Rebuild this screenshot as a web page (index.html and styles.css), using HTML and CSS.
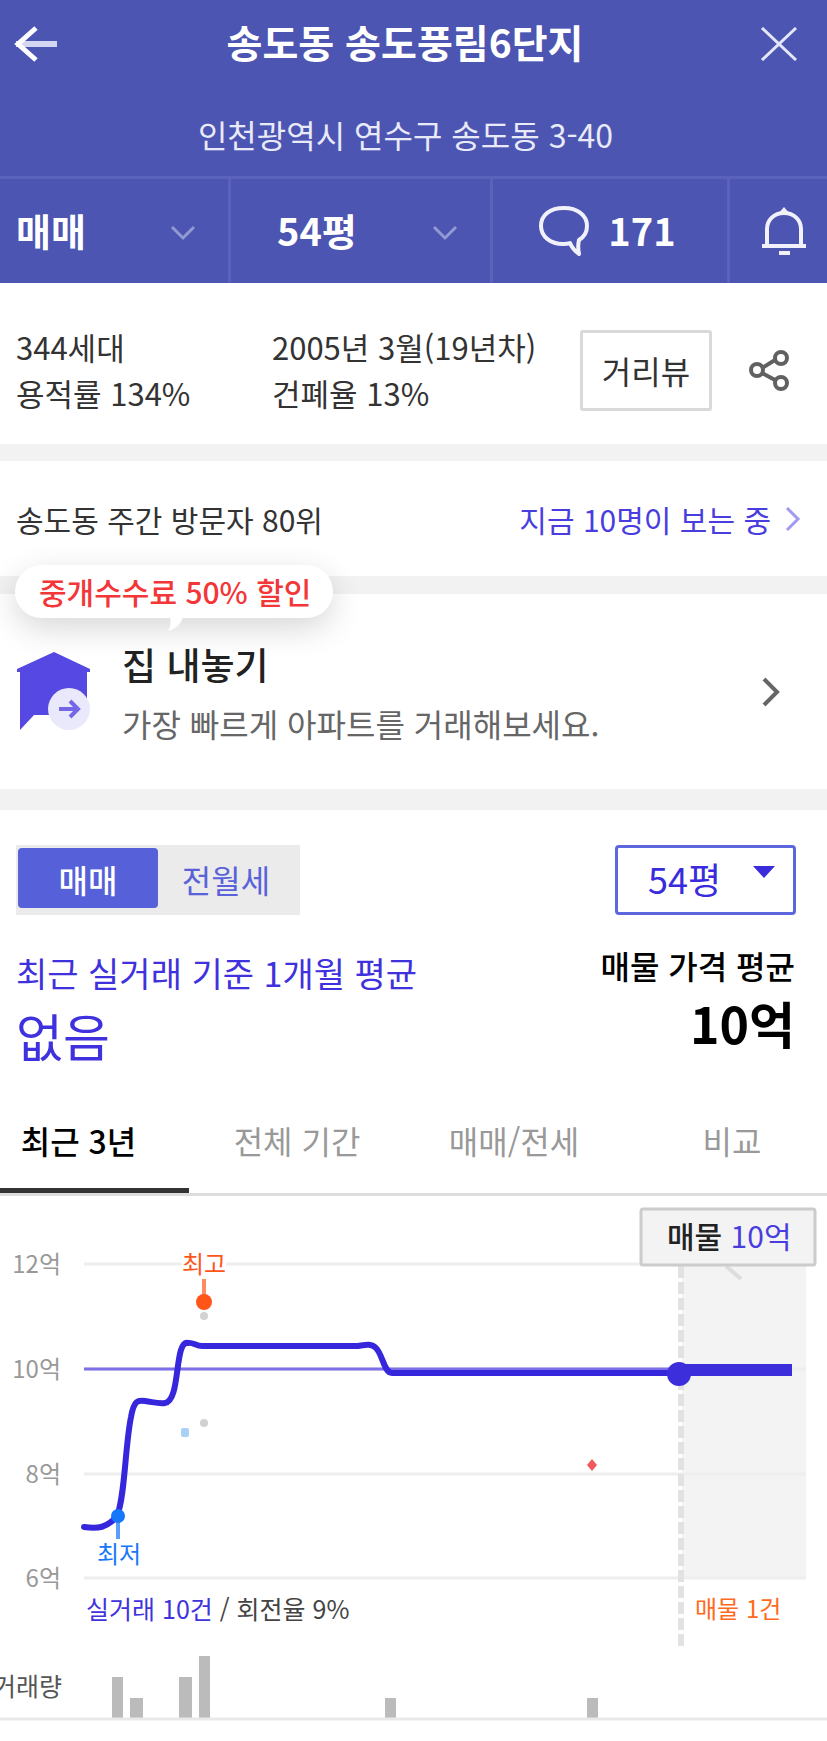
FILE: index.html
```html
<!DOCTYPE html>
<html lang="ko">
<head>
<meta charset="utf-8">
<meta name="viewport" content="width=device-width, initial-scale=1">
<title>송도동 송도풍림6단지</title>
<link rel="stylesheet" href="styles.css">
</head>
<body>
<header class="header">
  <div class="title-bar">
    <button class="icon-button" type="button" aria-label="뒤로">
      <svg width="44" height="38" viewBox="0 0 44 38" fill="none" stroke="#fff"><path d="M2 19H43" stroke-width="6" stroke="#d4d7f2"/><path d="M22 3L4 19L22 35" stroke-width="5"/></svg>
    </button>
    <h1 class="title">송도동 송도풍림6단지</h1>
    <button class="icon-button" type="button" aria-label="닫기">
      <svg width="38" height="34" viewBox="0 0 38 34" fill="none" stroke="#e4e6f7" stroke-width="3"><path d="M2 1L36 33M36 1L2 33"/></svg>
    </button>
  </div>
  <p class="address">인천광역시 연수구 송도동 3-40</p>
  <div class="filters">
    <div class="filter">
      <select class="filter-select" aria-label="거래 유형"><option>매매</option></select>
      <svg class="caret" width="26" height="16" viewBox="0 0 26 16" fill="none" stroke="#9399d3" stroke-width="3"><path d="M2 2L13 13L24 2"/></svg>
    </div>
    <div class="filter filter-area">
      <select class="filter-select" aria-label="평형"><option>54평</option></select>
      <svg class="caret" width="26" height="16" viewBox="0 0 26 16" fill="none" stroke="#9399d3" stroke-width="3"><path d="M2 2L13 13L24 2"/></svg>
    </div>
    <button class="filter filter-button" type="button" aria-label="이야기 171개">
      <svg width="52" height="52" viewBox="0 0 52 52" fill="none" stroke="#f0f1fb" stroke-width="4" stroke-linejoin="round"><path d="M26 3C12 3 3 10 3 21C3 32 13 39 25 39C28 39 30 39 32 38C34 43 37 46 41 49C40 44 40 39 41 35C46 32 49 27 49 21C49 10 39 3 26 3Z"/></svg>
      <span>171</span>
    </button>
    <button class="filter filter-bell" type="button" aria-label="알림">
      <svg width="46" height="48" viewBox="0 0 46 48" fill="none" stroke="#f0f1fb" stroke-width="4"><path d="M1 39H45"/><path d="M6 39V22C6 13 13 6 23 6C33 6 40 13 40 22V39"/><path d="M23 0L29 7H17Z" fill="#f0f1fb" stroke="none"/><path d="M18 46H29"/></svg>
    </button>
  </div>
</header>

<main>
  <section class="info">
    <p class="info-first">344세대<br>용적률 134%</p>
    <p class="info-second">2005년 3월(19년차)<br>건폐율 13%</p>
    <button class="street-view" type="button">거리뷰</button>
    <button class="icon-button" type="button" aria-label="공유">
      <svg width="42" height="42" viewBox="0 0 42 42" fill="none" stroke="#616161" stroke-width="4"><path d="M13 19L26 11M13 24L26 31"/><circle cx="8" cy="21" r="6"/><circle cx="32" cy="9" r="6"/><circle cx="32" cy="34" r="6"/></svg>
    </button>
  </section>

  <section class="visitors">
    <p>송도동 주간 방문자 80위</p>
    <a class="watching" href="#now">지금 10명이 보는 중
      <svg width="16" height="28" viewBox="0 0 16 28" fill="none" stroke="#a09af0" stroke-width="3"><path d="M2 3L13 14L2 25"/></svg>
    </a>
  </section>

  <section class="promo">
    <div class="bubble">중개수수료 50% 할인
      <svg class="bubble-tail" width="16" height="14" viewBox="0 0 16 14" fill="#fff"><path d="M3 0H16C14 7 9 12 1 14C4 9 4 4 3 0Z"/></svg>
    </div>
    <a class="promo-link" href="#sell">
      <svg width="74" height="80" viewBox="0 0 74 80"><path d="M38 0L74 17V20H71V60H34V63H18L4 78V20H1V17Z" fill="#5648e2"/><circle cx="53" cy="57" r="21" fill="#eae8fb"/><path d="M43 57H61M54 49L62 57L54 65" fill="none" stroke="#7467e6" stroke-width="4"/></svg>
      <span class="promo-text">
        <strong>집 내놓기</strong>
        <span>가장 빠르게 아파트를 거래해보세요.</span>
      </span>
      <svg width="20" height="32" viewBox="0 0 20 32" fill="none" stroke="#666" stroke-width="4"><path d="M3 3L16 16L3 29"/></svg>
    </a>
  </section>

  <section class="price">
    <div class="price-controls">
      <div class="toggle" role="group" aria-label="거래 종류">
        <button class="toggle-item toggle-active" type="button" aria-pressed="true">매매</button>
        <button class="toggle-item" type="button" aria-pressed="false">전월세</button>
      </div>
      <div class="area">
        <select class="area-select" aria-label="면적"><option>54평</option></select>
        <svg class="area-arrow" width="22" height="12" viewBox="0 0 22 12" fill="#3a2bdc"><path d="M0 0H22L11 12Z"/></svg>
      </div>
    </div>
    <dl class="averages">
      <div class="average-recent"><dt>최근 실거래 기준 1개월 평균</dt><dd>없음</dd></div>
      <div class="average-asking"><dt>매물 가격 평균</dt><dd>10억</dd></div>
    </dl>
    <nav class="tabs">
      <a class="tab tab-active" href="#recent" aria-current="page">최근 3년</a>
      <a class="tab" href="#all">전체 기간</a>
      <a class="tab" href="#types">매매/전세</a>
      <a class="tab" href="#compare">비교</a>
    </nav>
    <svg class="chart" viewBox="0 0 827 545" role="img" aria-label="최근 3년 실거래가">
      <rect x="682" y="68" width="124" height="315" fill="#f3f3f3"/>
      <g stroke="#eee" stroke-width="3"><path d="M84 68H806M84 173H806M84 278H806M84 382H806"/></g>
      <path d="M681 70V450" stroke="#e2e2e2" stroke-width="6" stroke-dasharray="12 4"/>
      <g class="axis" text-anchor="end"><text x="61" y="77">12억</text><text x="61" y="182">10억</text><text x="61" y="287">8억</text><text x="61" y="391">6억</text></g>
      <path d="M84 173H792" stroke="#7c6fe8" stroke-width="3"/>
      <path d="M679 174H792" stroke="#3d2edb" stroke-width="12"/>
      <path d="M84 331C98 333 107 332 117 320C125 301 125 250 131 221C134 204 138 204 145 205C153 206 159 208 165 207C181 205 174 144 188 147C193 146 196 150 202 150H358C365 149 371 147 376 152C383 159 384 177 392 177H679" fill="none" stroke="#3627dc" stroke-width="6" stroke-linecap="round" stroke-linejoin="round"/>
      <circle cx="679" cy="178" r="12" fill="#3d2edb"/>
      <rect x="182" y="57" width="44" height="24" fill="#fff"/>
      <path d="M204 83V103" stroke="#ff8b60" stroke-width="4"/>
      <circle cx="204" cy="106" r="8" fill="#ff5519"/>
      <text class="mark mark-high" x="204" y="77">최고</text>
      <path d="M118 323V343" stroke="#5c9dfa" stroke-width="4"/>
      <circle cx="118" cy="320" r="7" fill="#1677fb"/>
      <text class="mark mark-low" x="119" y="367">최저</text>
      <circle cx="204" cy="120" r="4" fill="#d2d2d2"/><circle cx="204" cy="227" r="4" fill="#d0d0d0"/>
      <rect x="181" y="232" width="8" height="9" rx="2" fill="#a9d1f5"/>
      <path d="M592 263L597 269L592 275L587 269Z" fill="#f2585c"/>
      <text class="summary" x="86" y="423"><tspan fill="#4032dc">실거래 10건</tspan> / 회전율 9%</text>
      <text class="summary-asking" x="695" y="422">매물 1건</text>
      <text class="volume" x="62" y="500">거래량</text>
      <g fill="#bbb"><rect x="112" y="481" width="11" height="42"/><rect x="130" y="502" width="13" height="21"/><rect x="179" y="481" width="13" height="42"/><rect x="199" y="460" width="11" height="63"/><rect x="385" y="502" width="11" height="21"/><rect x="587" y="502" width="11" height="21"/></g>
      <path d="M0 523H827" stroke="#e9e9e9" stroke-width="3"/>
      <path d="M726 70L741 83" stroke="#ddd" stroke-width="4"/>
      <rect x="641" y="13" width="174" height="56" rx="2" fill="#f3f3f3" stroke="#ccc" stroke-width="3"/>
      <text class="asking" x="667" y="52"><tspan fill="#222" font-weight="500">매물</tspan> 10억</text>
    </svg>
  </section>
</main>
</body>
</html>
```
FILE: styles.css
```css
* { box-sizing: border-box; margin: 0; padding: 0; }

body {
  background: #fff;
  color: #333;
  font-family: "Noto Sans CJK KR", "Noto Sans", sans-serif;
  font-size: 30px;
  overflow-x: hidden;
}

button, select { font: inherit; color: inherit; border: 0; background: none; appearance: none; }
a { color: inherit; text-decoration: none; }
svg { display: block; flex: none; }
.icon-button { display: flex; }

.header { background: #4c55b1; color: #fff; }
.title-bar { display: flex; align-items: center; justify-content: space-between; height: 88px; padding: 0 29px 0 14px; }
.title { padding: 0 8px 6px 0; font-size: 39px; font-weight: 700; line-height: 56px; }
.address { height: 88px; padding-right: 16px; font-size: 32px; line-height: 92px; text-align: center; color: #e9eaf8; }
.filters { display: grid; grid-template-columns: 228fr 262fr 237fr 100fr; height: 107px; border-top: 3px solid #5a62b9; }
.filter { position: relative; display: flex; align-items: center; font-size: 38px; font-weight: 700; }
.filter + .filter { border-left: 3px solid #5a62b9; }
.filter-select { width: 100%; height: 100%; padding-left: 16px; padding-bottom: 4px; }
.filter-area .filter-select { padding-left: 46px; }
.caret { position: absolute; right: 32px; top: 46px; pointer-events: none; }
.filter-button { justify-content: center; gap: 18px; padding-right: 6px; }
.filter-button span { padding-bottom: 4px; }
.filter-bell { padding-left: 31px; }

.info { display: flex; align-items: center; padding: 41px 36px 28px 16px; font-size: 31px; line-height: 46px; border-bottom: 17px solid #f2f2f2; }
.info-first { flex: 256; }
.info-second { flex: 308; white-space: nowrap; }
.street-view { width: 132px; height: 81px; margin-right: 37px; border: 3px solid #d9d9d9; border-radius: 3px; font-size: 32px; }

.visitors { display: flex; align-items: center; justify-content: space-between; height: 133px; padding: 0 26px 0 16px; border-bottom: 18px solid #f2f2f2; }
.watching { display: flex; align-items: center; gap: 14px; color: #4a3de0; }

.promo { position: relative; border-bottom: 21px solid #f2f2f2; }
.bubble { position: absolute; left: 15px; top: -29px; padding: 0 22px 0 24px; border-radius: 27px; background: #fff; box-shadow: 0 10px 32px rgb(0 0 0 / 16%); color: #f33638; font-weight: 500; line-height: 53px; }
.bubble-tail { position: absolute; left: 152px; top: 52px; }
.promo-link { display: flex; align-items: center; height: 195px; padding: 0 46px 0 16px; }
.promo-text { display: grid; flex: 1; padding: 4px 0 0 32px; font-size: 32px; line-height: 59px; color: #666; }
.promo-text strong { font-size: 37px; font-weight: 500; color: #222; }

.price-controls { display: flex; justify-content: space-between; padding: 35px 31px 0 16px; }
.toggle { display: flex; padding: 3px 2px 7px; height: 70px; background: #ebebeb; font-size: 32px; }
.toggle-item { width: 140px; padding-right: 4px; border-radius: 4px; color: #5a62da; line-height: 62px; }
.toggle-active { padding-right: 0; background: #5560d9; color: #fff; font-weight: 500; }
.area { position: relative; width: 181px; height: 70px; border: 3px solid #5d66dc; border-radius: 4px; }
.area-select { width: 100%; height: 100%; padding: 0 0 4px 30px; font-size: 36px; color: #3a2bdc; }
.area-arrow { position: absolute; right: 18px; top: 18px; pointer-events: none; }

.averages { display: flex; justify-content: space-between; height: 179px; padding: 26px 32px 0 16px; }
.average-recent { padding-top: 6px; color: #3f31dd; }
.average-recent dt { font-size: 34px; line-height: 52px; }
.average-recent dd { font-size: 51px; line-height: 72px; }
.average-asking { color: #000; font-weight: 500; text-align: right; }
.average-asking dt { font-size: 32px; line-height: 48px; }
.average-asking dd { font-size: 50px; line-height: 66px; font-weight: 700; }

.tabs { display: grid; grid-template-columns: 189fr 216fr 218fr 204fr; height: 102px; border-bottom: 3px solid #ddd; font-size: 32px; line-height: 92px; color: #999; text-align: center; }
.tab-active { padding-right: 32px; border-bottom: 5px solid #333; color: #000; font-weight: 500; }
.tab:last-child { padding-left: 14px; }

.chart { width: 100%; height: auto; font-size: 24px; }
.axis { fill: #999; }
.mark { text-anchor: middle; }
.mark-high { fill: #ff5519; }
.mark-low { fill: #1677fb; }
.summary { font-size: 25px; fill: #444; }
.summary-asking { fill: #ff6a1c; }
.volume { text-anchor: end; fill: #555; font-size: 25px; }
.asking { fill: #4a3de0; font-size: 30px; }
```
